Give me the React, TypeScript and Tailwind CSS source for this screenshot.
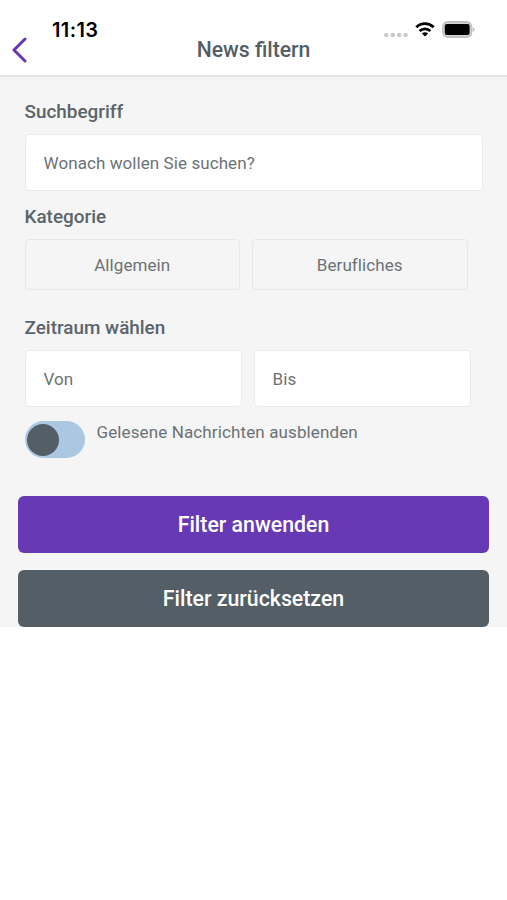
import React, { useState } from 'react';

const categories = ['Allgemein', 'Berufliches'];

const StatusBar: React.FC = () => (
  <div className="flex h-[22px] items-center justify-between pl-[52px] pr-[32px]">
    <span className="font-['Inter',sans-serif] text-[20px] font-semibold leading-[22px] tracking-[0.4px] text-black">
      11:13
    </span>
    <div className="flex items-center">
      <svg width="24" height="6" viewBox="0 0 24 6" className="mt-[9px] fill-[#c8c8ca]">
        <circle cx="2.3" cy="3" r="2.2" />
        <circle cx="8.8" cy="3" r="2.2" />
        <circle cx="15.2" cy="3" r="2.2" />
        <circle cx="21.6" cy="3" r="2.2" />
      </svg>
      <svg width="20" height="15" viewBox="0 0 20 15" className="-mt-[2px] ml-[7px]">
        <path d="M1.3 5.2a12.6 12.6 0 0 1 17.4 0" fill="none" stroke="#000" strokeWidth="2.7" />
        <path d="M4.6 9a7.8 7.8 0 0 1 10.8 0" fill="none" stroke="#000" strokeWidth="2.6" />
        <path d="M10 14.6 6.9 11.5a4.4 4.4 0 0 1 6.2 0z" fill="#000" />
      </svg>
      <svg width="33" height="17" viewBox="0 0 33 17" className="-mt-[2px] ml-[7px]">
        <rect x="1" y="1" width="28.4" height="15" rx="4.6" fill="#d6d6d6" stroke="#c2c2c2" strokeWidth="1.8" />
        <rect x="2.8" y="3" width="24.8" height="11" rx="2" fill="#000" />
        <path d="M30.8 6.2c2.4.6 2.4 4 0 4.6z" fill="#bfbfbf" />
      </svg>
    </div>
  </div>
);

const Header: React.FC = () => (
  <header className="h-[77px] border-b-2 border-[#e3e3e4] bg-white pt-[19px]">
    <StatusBar />
    <div className="-mt-[4px] grid h-[26px] grid-cols-[1fr_auto_1fr] items-center">
      <button type="button" aria-label="Zurück" className="ml-[11px] w-[17px]">
        <svg width="17" height="26" viewBox="0 0 17 26" fill="none" stroke="#6638b4" strokeWidth="3" strokeLinecap="round" strokeLinejoin="round">
          <path d="M14 2 3 13l11 11" />
        </svg>
      </button>
      <h1 className="text-[21.2px] font-medium leading-[26px] text-[#535e66]">News filtern</h1>
    </div>
  </header>
);

const SectionLabel: React.FC<{ children: React.ReactNode }> = ({ children }) => (
  <h2 className="text-[18.9px] font-medium leading-6 text-[#5b646a]">{children}</h2>
);

const DateField: React.FC<{ label: string }> = ({ label }) => (
  <button
    type="button"
    className="h-[57px] w-[217px] rounded-[4px] border border-[#e9ebec] bg-white px-[18px] pt-[2px] text-left text-[17px] tracking-[0.08px] text-[#6b7276]"
  >
    {label}
  </button>
);

export default function App() {
  const [hideRead, setHideRead] = useState(false);
  const [selected, setSelected] = useState<string | null>(null);

  return (
    <div className="min-h-screen bg-white font-['Roboto',sans-serif]">
      <Header />
      <main className="h-[550px] bg-[#f5f5f5] px-[18px] pt-[23px]">
        <div className="pl-[6.5px] pr-[6px]">
          <SectionLabel>Suchbegriff</SectionLabel>
          <div className="mt-[10px] flex h-[57px] items-center rounded-[4px] border border-[#e9ebec] bg-white px-[18px] pt-[2px] text-[17px] tracking-[0.08px] text-[#6b7276]">
            Wonach wollen Sie suchen?
          </div>

          <div className="mt-[14px]">
            <SectionLabel>Kategorie</SectionLabel>
          </div>
          <div className="mt-[10px] flex gap-3">
            {categories.map(category => (
              <button
                key={category}
                type="button"
                aria-pressed={selected === category}
                onClick={() => setSelected(category)}
                className="h-[51px] w-[215.5px] rounded-[4px] border border-[#e6e7e8] pt-[2px] text-[17px] tracking-[0.08px] text-[#6b7276]"
              >
                {category}
              </button>
            ))}
          </div>

          <div className="mt-[26px]">
            <SectionLabel>Zeitraum wählen</SectionLabel>
          </div>
          <div className="mt-[10px] flex gap-3">
            <DateField label="Von" />
            <DateField label="Bis" />
          </div>

          <div className="mt-[14px] flex items-start gap-3">
            <button
              type="button"
              role="switch"
              aria-checked={hideRead}
              aria-label="Gelesene Nachrichten ausblenden"
              onClick={() => setHideRead(!hideRead)}
              className={`flex h-[37px] w-[60px] items-center rounded-full bg-[#abc8e3] px-[2px] ${hideRead ? 'justify-end' : 'justify-start'}`}
            >
              <span className="h-[32px] w-[32px] rounded-full bg-[#535e66]" />
            </button>
            <span className="text-[17px] leading-[22px] tracking-[0.12px] text-[#6b7276]">Gelesene Nachrichten ausblenden</span>
          </div>
        </div>

        <div className="mt-[38px] flex flex-col gap-[17px]">
          <button type="button" className="h-[57px] rounded-[6px] bg-[#6839b5] text-[21.3px] font-medium text-white">
            Filter anwenden
          </button>
          <button type="button" className="h-[57px] rounded-[6px] bg-[#535e66] text-[21.3px] font-medium text-white">
            Filter zurücksetzen
          </button>
        </div>
      </main>
    </div>
  );
}
